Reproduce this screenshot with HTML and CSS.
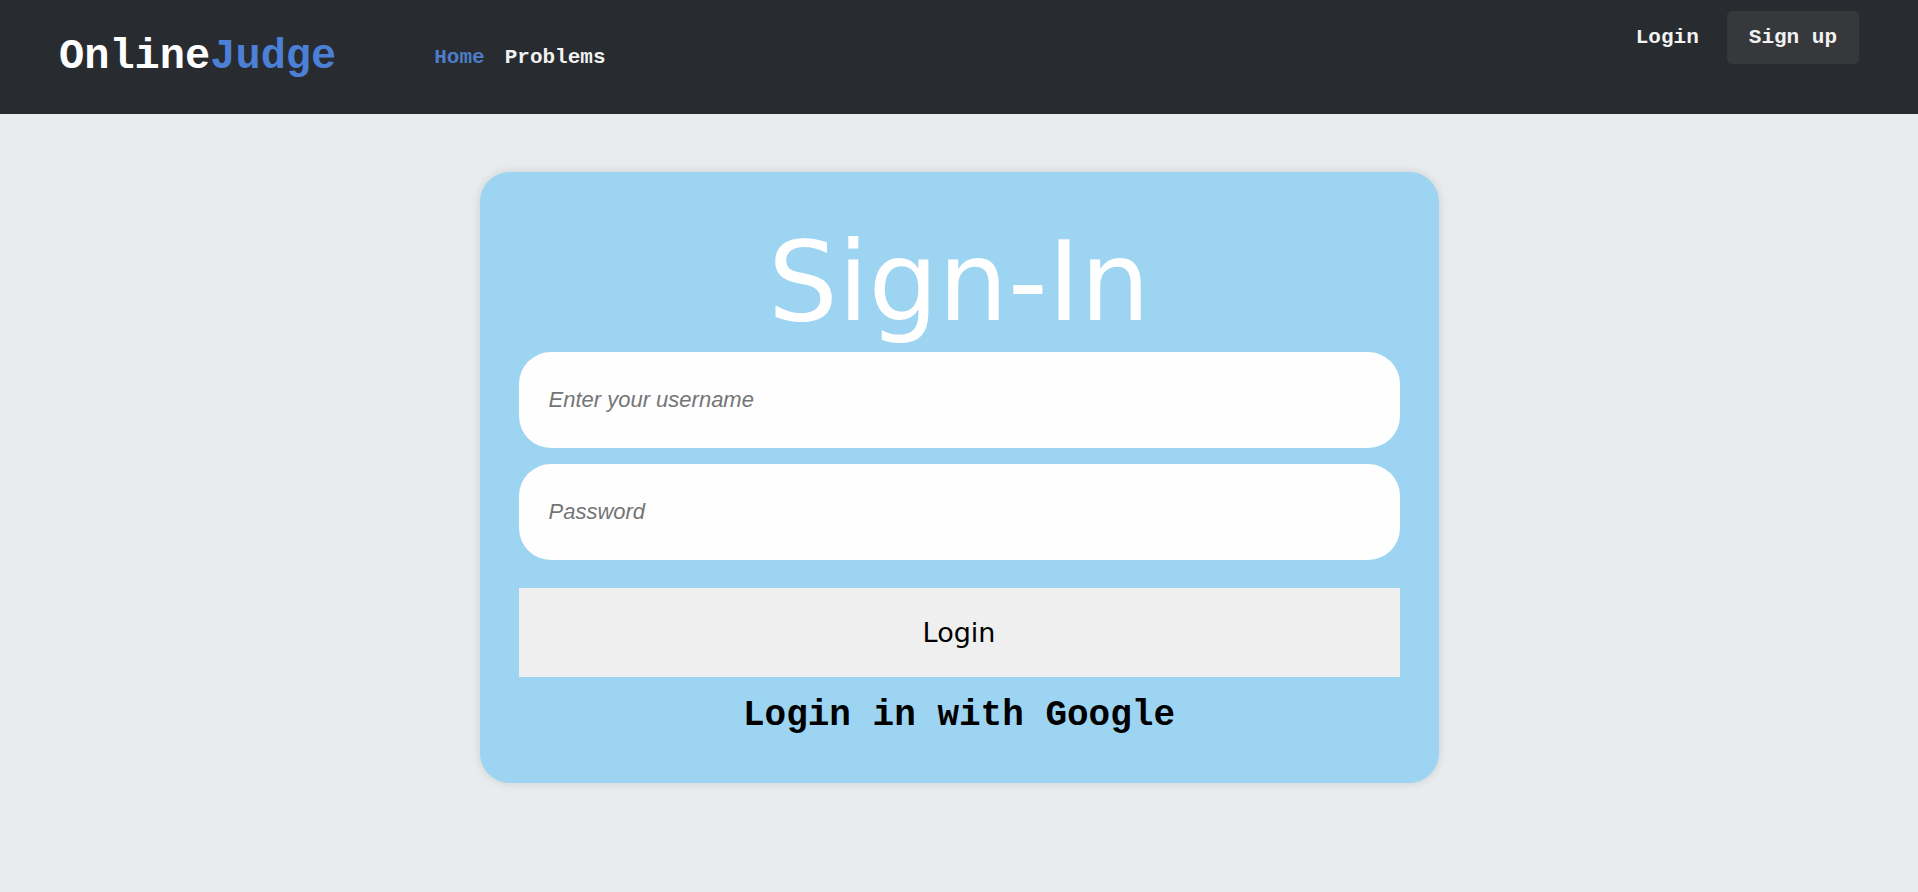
FILE: index.html
```html
<!DOCTYPE html>
<html lang="en">
<head>
<meta charset="utf-8">
<title>OnlineJudge - Sign In</title>
<link rel="stylesheet" href="styles.css">
</head>
<body>
<header class="navbar">
  <div class="nav-left">
    <a class="logo" href="#"><span class="logo-white">Online</span><span class="logo-blue">Judge</span></a>
    <nav class="nav-links">
      <a class="nav-link active" href="#">Home</a>
      <a class="nav-link" href="#">Problems</a>
    </nav>
  </div>
  <div class="nav-right">
    <a class="nav-login" href="#">Login</a>
    <a class="nav-signup" href="#">Sign up</a>
  </div>
</header>
<main class="page">
  <form class="card">
    <h1 class="card-title">Sign-In</h1>
    <input class="field" type="text" placeholder="Enter your username">
    <input class="field field-second" type="password" placeholder="Password">
    <button class="login-btn" type="button">Login</button>
    <div class="google">Login in with Google</div>
  </form>
</main>
</body>
</html>
```
FILE: styles.css
```css
html, body {
  margin: 0;
  padding: 0;
}
body {
  background: #e8ecef;
  font-family: "Liberation Mono", "Courier New", monospace;
  min-height: 892px;
}
a {
  text-decoration: none;
}
.navbar {
  height: 114px;
  background: #282c30;
  display: flex;
  justify-content: space-between;
  padding: 0 59px;
  box-sizing: border-box;
}
.nav-left {
  display: flex;
  align-items: center;
}
.logo {
  font-family: "Liberation Mono", "Courier New", monospace;
  font-weight: bold;
  font-size: 42px;
  line-height: 1.133;
  margin-top: 2px;
}
.logo-white {
  color: #ffffff;
}
.logo-blue {
  color: #4c80d6;
}
.nav-links {
  display: flex;
  gap: 20px;
  margin-left: 98px;
}
.nav-link {
  font-family: "Liberation Mono", "Courier New", monospace;
  font-weight: bold;
  font-size: 21px;
  color: #f2f2f2;
}
.nav-link.active {
  color: #4d7cc8;
}
.nav-right {
  display: flex;
  align-items: center;
  align-self: flex-start;
  margin-top: 11px;
  gap: 28px;
}
.nav-login {
  font-family: "Liberation Mono", "Courier New", monospace;
  font-weight: bold;
  font-size: 21px;
  color: #f2f2f2;
}
.nav-signup {
  font-family: "Liberation Mono", "Courier New", monospace;
  font-weight: bold;
  font-size: 21px;
  color: #f2f2f2;
  background: #36383c;
  border-radius: 5px;
  height: 53px;
  line-height: 53px;
  padding: 0 22px;
}
.page {
  padding-top: 58px;
}
.card {
  width: 50%;
  margin: 0 auto;
  box-sizing: border-box;
  background: #9dd4f2;
  border-radius: 30px;
  box-shadow: 0 0 10px rgba(0, 0, 0, 0.12);
  padding: 46px 39px 47px;
  display: flex;
  flex-direction: column;
}
.card-title {
  margin: 0;
  font-family: "Comic Sans MS", "DejaVu Sans", sans-serif;
  font-weight: normal;
  font-size: 110px;
  line-height: 128px;
  color: #ffffff;
  text-align: center;
}
.field {
  margin-top: 6px;
  height: 96px;
  width: 100%;
  box-sizing: border-box;
  border: none;
  outline: none;
  border-radius: 32px;
  background: #fefefe;
  padding: 0 30px;
  font-family: "Liberation Sans", Arial, sans-serif;
  font-size: 22px;
  font-style: italic;
  color: #333;
}
.field::placeholder {
  color: #757575;
  font-style: italic;
}
.field-second {
  margin-top: 16px;
}
.login-btn {
  margin-top: 28px;
  height: 89px;
  width: 100%;
  border: none;
  border-radius: 0;
  background: #efefef;
  color: #000;
  font-family: "Comic Sans MS", "DejaVu Sans", sans-serif;
  font-size: 27px;
  cursor: pointer;
}
.google {
  margin-top: 18px;
  text-align: center;
  font-family: "Liberation Mono", "Courier New", monospace;
  font-weight: bold;
  font-size: 36px;
  line-height: 41px;
  color: #000;
}
```
